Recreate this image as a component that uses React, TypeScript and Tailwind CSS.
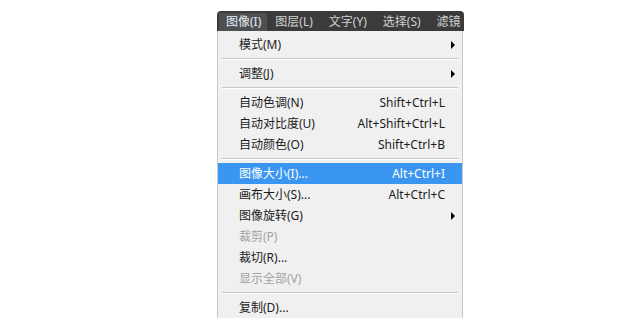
const menuBar = ['图像(I)', '图层(L)', '文字(Y)', '选择(S)', '滤镜'];

type Row =
  | { type: 'sep' }
  | { type: 'item'; label: string; shortcut?: string; submenu?: boolean; disabled?: boolean; active?: boolean };

const rows: Row[] = [
  { type: 'item', label: '模式(M)', submenu: true },
  { type: 'sep' },
  { type: 'item', label: '调整(J)', submenu: true },
  { type: 'sep' },
  { type: 'item', label: '自动色调(N)', shortcut: 'Shift+Ctrl+L' },
  { type: 'item', label: '自动对比度(U)', shortcut: 'Alt+Shift+Ctrl+L' },
  { type: 'item', label: '自动颜色(O)', shortcut: 'Shift+Ctrl+B' },
  { type: 'sep' },
  { type: 'item', label: '图像大小(I)...', shortcut: 'Alt+Ctrl+I', active: true },
  { type: 'item', label: '画布大小(S)...', shortcut: 'Alt+Ctrl+C' },
  { type: 'item', label: '图像旋转(G)', submenu: true },
  { type: 'item', label: '裁剪(P)', disabled: true },
  { type: 'item', label: '裁切(R)...' },
  { type: 'item', label: '显示全部(V)', disabled: true },
  { type: 'sep' },
  { type: 'item', label: '复制(D)...' },
];

const App = () => {
  return (
    <div
      className="w-[620px] h-[318px] bg-white overflow-hidden"
      style={{ fontFamily: '"Noto Sans", "Noto Sans CJK SC", sans-serif' }}
    >
      <div className="ml-[217px] mt-[11px] w-[247px]">
        {/* Menu bar */}
        <div className="h-[20px] bg-[#3b3b3b] rounded-t-[4px] flex items-end overflow-hidden whitespace-nowrap">
          {menuBar.map((name, i) => (
            <div
              key={name}
              className={`h-[18px] flex items-center shrink-0 text-[12px] leading-none ${
                i === 0 ? 'ml-[2px] pl-[7px] pr-[6px] bg-[#4d4f52] text-[#e4ecf4]' : 'px-[8px] text-[#d2d2d2]'
              }`}
            >
              {name}
            </div>
          ))}
        </div>

        {/* Dropdown */}
        <div className="w-[246px] h-[287px] bg-[#f0f0f0] border-x border-[#c9c9c9] pt-[3px]">
          {rows.map((row, i) =>
            row.type === 'sep' ? (
              <div key={i} className="h-[8px] flex flex-col justify-center px-[4px]">
                <div className="border-t border-[#c6c6c6] border-b border-b-white" />
              </div>
            ) : (
              <div
                key={i}
                className={`h-[21px] flex items-center pl-[21px] text-[12px] leading-none whitespace-nowrap ${
                  row.active
                    ? 'bg-[#3a96f0] text-white'
                    : row.disabled
                    ? 'text-[#a3a3a3]'
                    : 'text-[#1c1c1c]'
                }`}
              >
                <span className="flex-1">{row.label}</span>
                {row.shortcut && <span>{row.shortcut}</span>}
                <span className="w-[17px] flex items-center">
                  {row.submenu && (
                    <span className="ml-[6px] w-0 h-0 border-y-[4px] border-y-transparent border-l-[4px] border-l-black" />
                  )}
                </span>
              </div>
            )
          )}
        </div>
      </div>
    </div>
  );
};

export default App;
